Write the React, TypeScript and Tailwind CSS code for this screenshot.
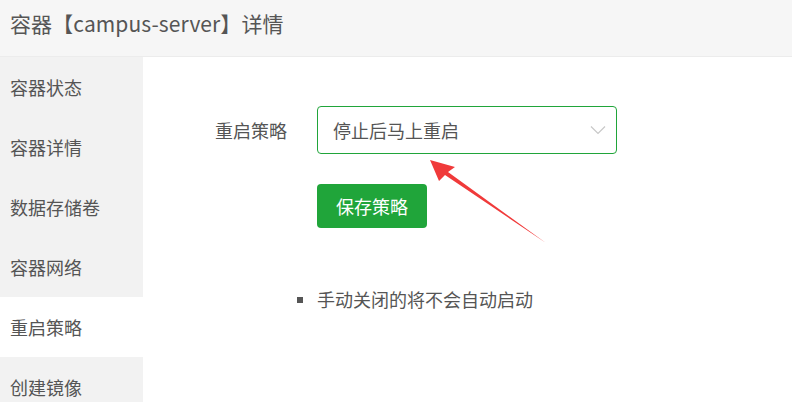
import React from "react";

const font = { fontFamily: '"Microsoft YaHei", "Noto Sans CJK SC", "Open Sans", sans-serif' };

export default function App() {
  const items = ["容器状态", "容器详情", "数据存储卷", "容器网络", "重启策略", "创建镜像"];
  return (
    <div className="relative w-[792px] h-[402px] overflow-hidden bg-white" style={font}>
      <div className="h-[57px] bg-[#f6f6f6] border-b border-[#ececec] flex items-center pl-[10px] pb-[9px] text-[21px] text-[#555] tracking-[0.1px]">
        容器【campus-server】详情
      </div>
      <div className="flex">
        <div className="w-[143px] bg-[#f2f2f2] flex flex-col">
          {items.map((t) => (
            <div
              key={t}
              className={
                t === "重启策略"
                  ? "h-[60px] flex items-center pl-[10px] text-[18px] text-[#555] bg-white"
                  : "h-[60px] flex items-center pl-[10px] text-[18px] text-[#555]"
              }
            >
              {t}
            </div>
          ))}
        </div>
        <div className="flex-1 pt-[49px]">
          <div className="flex items-center">
            <div className="w-[174px] text-right pr-[30px] text-[18px] text-[#555]">重启策略</div>
            <div className="w-[300px] h-[48px] border border-[#20a53a] rounded-[4px] flex items-center justify-between pl-[15px] pr-[10px] text-[18px] text-[#555]">
              <span>停止后马上重启</span>
              <svg width="16" height="10" viewBox="0 0 16 10" fill="none">
                <path d="M1 1.5 L8 8.5 L15 1.5" stroke="#c8c8c8" strokeWidth="1.2" />
              </svg>
            </div>
          </div>
          <div className="pl-[174px] mt-[30px]">
            <button className="w-[110px] h-[44px] bg-[#20a53a] rounded-[4px] text-white text-[18px]">保存策略</button>
          </div>
          <div className="flex items-center pl-[154px] mt-[58px] text-[18px] text-[#555]">
            <span className="w-[6px] h-[6px] bg-[#555] mr-[14px]"></span>
            <span>手动关闭的将不会自动启动</span>
          </div>
        </div>
      </div>
      <svg className="absolute left-0 top-0 pointer-events-none" width="792" height="402">
        <polygon points="430,160 455,167 448,172 546,243 445,175 439,181" fill="#f03a3a" />
      </svg>
    </div>
  );
}
